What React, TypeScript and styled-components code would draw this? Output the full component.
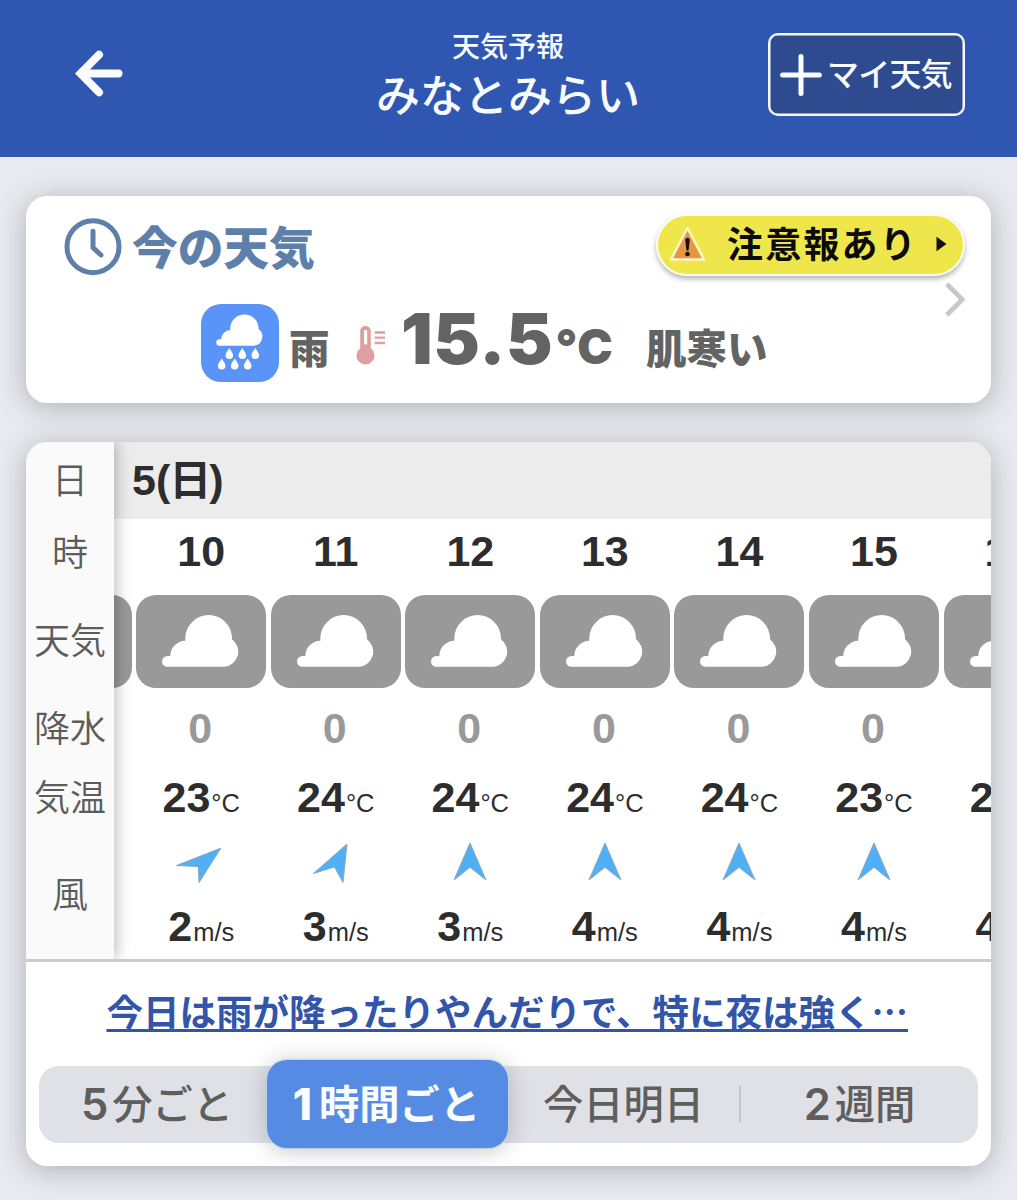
import React from "react";
import styled, { createGlobalStyle } from "styled-components";

const GlobalStyle = createGlobalStyle`
  * { box-sizing: border-box; }
  body {
    margin: 0;
    background: #e8eaef;
    font-family: "Noto Sans CJK JP", sans-serif;
  }
`;

const Screen = styled.div`
  width: 1017px;
  height: 1200px;
  overflow: hidden;
  display: flex;
  flex-direction: column;
  background: #e8eaef;
`;

const Header = styled.header`
  height: 157px;
  flex: none;
  display: grid;
  grid-template-columns: 1fr auto 1fr;
  padding: 0 52px 0 75px;
  background: #2f57b2;
  color: #f8fbff;
`;

const BackButton = styled.div`
  margin-top: 49px;
`;

const Titles = styled.div`
  display: flex;
  flex-direction: column;
  align-items: center;
  margin-right: 24px;
  padding-top: 25px;
`;

const Overline = styled.div`
  font-size: 28px;
  line-height: 40px;
  font-weight: 500;
`;

const Place = styled.h1`
  margin: 0;
  font-size: 44px;
  line-height: 56px;
  font-weight: 500;
`;

const MyWeather = styled.div`
  justify-self: end;
  margin-top: 33px;
  width: 197px;
  height: 83px;
  display: flex;
  align-items: center;
  padding-left: 10px;
  gap: 5px;
  border: 2px solid #f6faff;
  border-radius: 10px;
  background: #2f4b8f;
  box-shadow: inset 0 0 0 0.5px #f6faff;
  white-space: nowrap;
  font-size: 32px;
  line-height: 40px;
  font-weight: 500;
  letter-spacing: -0.8px;
`;

const MyWeatherText = styled.span`
  padding-bottom: 5px;
`;

const Card = styled.section`
  margin: 39px 26px 0;
  width: 965px;
  flex: none;
  border-radius: 21px;
  background: #fff;
  box-shadow: 0 4px 28px rgba(40, 42, 50, 0.3);
`;

const NowCard = styled(Card)`
  height: 207px;
  padding: 18px 24px 0 38px;
`;

const NowTop = styled.div`
  display: flex;
  justify-content: space-between;
  height: 63px;
  padding-right: 2px;
`;

const NowHeading = styled.h2`
  display: flex;
  align-items: center;
  gap: 10px;
  height: 66px;
  margin: 0;
  color: #5f7fab;
  font-size: 45.7px;
  font-weight: 900;
  line-height: 60px;
`;

const NowHeadingText = styled.span`
  padding-bottom: 5px;
`;

const Advisory = styled.div`
  display: flex;
  align-items: center;
  width: 309px;
  height: 62px;
  padding: 0 16px 2px 10px;
  border: 2px solid #fffdf0;
  border-radius: 31px;
  background: #eee64b;
  box-shadow: 0 3px 5px rgba(30, 40, 60, 0.35);
  color: #0b0b0b;
  white-space: nowrap;
`;

const AdvisoryText = styled.span`
  flex: 1;
  padding: 0 0 4px 19px;
  font-size: 36px;
  line-height: 50px;
  font-weight: 700;
  letter-spacing: 2.2px;
`;

const NowBody = styled.div`
  display: flex;
  color: #636363;
  padding-left: 137px;
`;

const WeatherTile = styled.div`
  flex: none;
  width: 78px;
  height: 78px;
  margin: 27px 10px 0 0;
`;

const Condition = styled.span<{ $w: number; $gap: number }>`
  width: ${(p) => p.$w}px;
  margin-left: ${(p) => p.$gap}px;
  margin-top: 40px;
  font-size: 40.5px;
  line-height: 60px;
  font-weight: 900;
  white-space: nowrap;
`;

const ThermoSlot = styled.div`
  width: 30px;
  margin: 48px 0 0 27px;
`;

const Temperature = styled.div`
  display: flex;
  align-items: baseline;
  width: 215px;
  margin: 27px 0 0 15px;
  font-family: Inter, sans-serif;
  font-size: 70px;
  line-height: 70px;
  font-weight: 900;
  letter-spacing: 0.7px;
  white-space: nowrap;
`;

const Degree = styled.span`
  margin-left: 2px;
  font-size: 47.5px;
  font-weight: 900;
  letter-spacing: 1px;
`;

const ChevronSlot = styled.div`
  margin: 5px 0 0 auto;
`;

const ForecastCard = styled(Card)`
  height: 724px;
  overflow: hidden;
`;

const Table = styled.div`
  display: flex;
  height: 520px;
  border-bottom: 3px solid #cbcbcc;
  overflow: hidden;
`;

const Labels = styled.div`
  position: relative;
  z-index: 1;
  flex: none;
  width: 88px;
  background: #fafafa;
  box-shadow: 2px 0 14px rgba(0, 0, 0, 0.28);
`;

const Label = styled.div<{ $h: number }>`
  height: ${(p) => p.$h}px;
  display: flex;
  align-items: center;
  justify-content: center;
  padding-bottom: 6px;
  color: #5c5c5c;
  font-size: 36px;
  line-height: 40px;
  font-weight: 350;
`;

const Timeline = styled.div`
  flex: 1;
  min-width: 0;
  overflow: hidden;
  color: #2d2d2d;
  font-family: "Liberation Sans", "Noto Sans CJK JP", sans-serif;
`;

const DateBar = styled.div`
  height: 77px;
  padding-left: 18px;
  background: #ececec;
  font-size: 43px;
  line-height: 76px;
  font-weight: 700;
`;

const DayName = styled.span`
  font-size: 42px;
  line-height: 1;
  letter-spacing: -2px;
  margin-left: -1px;
`;

const Hours = styled.div`
  display: flex;
  margin-left: -114.6px;
`;

const Hour = styled.div`
  flex: none;
  width: 134.55px;
  display: flex;
  flex-direction: column;
  align-items: center;
`;

const Cell = styled.div<{ $h: number; $muted?: boolean }>`
  height: ${(p) => p.$h}px;
  display: flex;
  align-items: baseline;
  padding-right: ${(p) => (p.$muted ? 2 : 0)}px;
  font-size: 43px;
  line-height: ${(p) => p.$h}px;
  font-weight: 700;
  color: ${(p) => (p.$muted ? "#999" : "#2d2d2d")};
`;

const Unit = styled.span`
  padding-left: 1px;
  font-size: 25.5px;
  font-weight: 400;
`;

const HourTile = styled.div`
  width: 130px;
  height: 92.5px;
  margin-top: 12px;
  padding: 20px 0 0 26px;
  border-radius: 20px;
  background: #999;
`;

const ArrowCell = styled.div`
  height: 67px;
  padding: 13px 2px 0 0;
`;

const Summary = styled.a`
  display: block;
  margin: 19px 0 0 80.5px;
  height: 60px;
  color: #3355a9;
  font-size: 36.5px;
  line-height: 60px;
  font-weight: 700;
  white-space: nowrap;
  text-decoration: underline;
  text-decoration-thickness: 2.5px;
  text-underline-offset: 3px;
  text-decoration-skip-ink: none;
`;

const Tabs = styled.div`
  display: flex;
  align-items: center;
  width: 939px;
  height: 77px;
  margin: 24.5px 13px 0;
  border-radius: 20px;
  background: #dfe1e7;
`;

const Tab = styled.div<{ $w: number; $active?: boolean; $shift?: number }>`
  flex: none;
  width: ${(p) => p.$w}px;
  height: ${(p) => (p.$active ? 88 : 77)}px;
  display: flex;
  align-items: center;
  justify-content: center;
  gap: ${(p) => (p.$active ? 7 : 4)}px;
  padding: 0 ${(p) => (p.$active ? 2 : 0)}px 0 ${(p) => p.$shift ?? 0}px;
  border-radius: 20px;
  background: ${(p) => (p.$active ? "#568be4" : "transparent")};
  box-shadow: ${(p) => (p.$active ? "0 2px 22px rgba(60,60,70,.3), 0 0 1px 1px #d9e9fd" : "none")};
  color: ${(p) => (p.$active ? "#fafdff" : "#5e5e5e")};
  font-size: 40.3px;
  line-height: 60px;
  font-weight: ${(p) => (p.$active ? 700 : 500)};
  white-space: nowrap;
`;

const TabText = styled.span`
  padding-bottom: 4px;
`;

const Digit = styled.span<{ $heavy?: boolean }>`
  font-family: Inter, sans-serif;
  font-size: 43.5px;
  font-weight: ${(p) => (p.$heavy ? 800 : 600)};
`;

const Divider = styled.div`
  width: 2px;
  height: 36px;
  background: #c3c5ca;
`;

const CLOUD =
  "M5.4 51.8A5.4 5.4 0 0 1 5.4 41H8.3A15.5 15.5 0 0 1 23.3 25.7V23.4A23.3 23.3 0 0 1 70 23.4V24.3A15.3 15.3 0 0 1 62.5 51.8Z";

const CloudIcon = () => (
  <svg width="78" height="52" viewBox="0 0 78 52" display="block">
    <path d={CLOUD} fill="#fff" />
  </svg>
);

const RAIN_DROPS = [
  [28.3, 44], [41.3, 44], [54.3, 44],
  [20.7, 54.5], [33.7, 54.5], [46.7, 54.5],
];

const RainIcon = () => (
  <svg width="78" height="78" viewBox="0 0 78 78" display="block">
    <rect width="78" height="78" rx="20" fill="#5a94f8" />
    <path d={CLOUD} fill="#fff" transform="translate(15.2 10.4) scale(.605)" />
    {RAIN_DROPS.map(([x, y]) => (
      <path
        key={`${x}-${y}`}
        transform={`translate(${x} ${y})`}
        d="M0 0C1.2 2.4 3.8 4.8 3.8 7.3A3.8 3.8 0 0 1-3.8 7.3C-3.8 4.8-1.2 2.4 0 0Z"
        fill="#fff"
      />
    ))}
  </svg>
);

const BackIcon = () => (
  <svg width="50" height="50" viewBox="0 0 50 50" fill="none" stroke="#fafdff" strokeWidth="8" strokeLinecap="round">
    <path d="M24 5.7L5.5 24.5L24 43.3M7 24.5H43.5" />
  </svg>
);

const PlusIcon = () => (
  <svg width="42" height="42" viewBox="0 0 42 42" stroke="#f8fbff" strokeWidth="5" strokeLinecap="round">
    <path d="M21 2.6V39.4M2.6 21H39.4" />
  </svg>
);

const ClockIcon = () => (
  <svg width="58" height="58" viewBox="0 0 58 58" fill="none" stroke="#5f7fab" strokeWidth="5" strokeLinecap="round" strokeLinejoin="round">
    <circle cx="29" cy="28.7" r="26" />
    <path d="M29 13.2V29.7L37 37" />
  </svg>
);

const WarningIcon = () => (
  <svg width="40" height="38" viewBox="0 0 40 38">
    <path d="M19.5 3L36 34.5H3Z" fill="#e8963f" stroke="#fdf6c8" strokeWidth="2.6" strokeLinejoin="round" />
    <path d="M17.3 15A2.2 2.2 0 0 1 21.7 15L20.7 24.6A1.2 1.2 0 0 1 18.3 24.6Z" fill="#141005" />
    <circle cx="19.5" cy="29" r="2.3" fill="#141005" />
  </svg>
);

const PlayIcon = () => (
  <svg width="11" height="16" viewBox="0 0 11 16">
    <path d="M.5.8L10.5 8L.5 15.2Z" fill="#111" />
  </svg>
);

const ThermometerIcon = () => (
  <svg width="30" height="41" viewBox="0 0 30 41" fill="#df9f9f">
    <path d="M4.2 6A5.3 5.3 0 0 1 14.8 6V23.3A9 9 0 1 1 4.2 23.3Z" />
    <rect x="8" y="5" width="3.2" height="14.5" rx="1" fill="#fff" />
    <path d="M18.7 7.5H29M18.7 12.6H29M18.7 18H29" stroke="#df9f9f" strokeWidth="2.3" />
  </svg>
);

const ChevronIcon = () => (
  <svg width="22" height="35" viewBox="0 0 22 35" fill="none" stroke="#c6c6cd" strokeWidth="4.6">
    <path d="M1.8 2L17.3 17.5L1.8 33" />
  </svg>
);

const ARROWS = {
  north: "M24 3L40 40L24 27.3L8 40Z",
  northNorthEast: "M35 4L31 42.5L22.5 27L1.5 33.4Z",
  northEast: "M44 8L22 42.5L21.3 26.6L-.5 25.5Z",
};
type Direction = keyof typeof ARROWS;

const WindArrow = ({ direction }: { direction: Direction }) => (
  <svg width="46" height="46" viewBox="0 0 46 46" overflow="visible" display="block">
    <path d={ARROWS[direction]} fill="#4fb0f8" stroke="#8fa6b8" strokeWidth="1" />
  </svg>
);

interface HourForecast {
  hour: string;
  temp: number;
  wind: number;
  direction: Direction;
}

const hours: HourForecast[] = [
  { hour: "10", temp: 23, wind: 2, direction: "northEast" },
  { hour: "11", temp: 24, wind: 3, direction: "northNorthEast" },
  { hour: "12", temp: 24, wind: 3, direction: "north" },
  { hour: "13", temp: 24, wind: 4, direction: "north" },
  { hour: "14", temp: 24, wind: 4, direction: "north" },
  { hour: "15", temp: 23, wind: 4, direction: "north" },
  { hour: "16", temp: 22, wind: 4, direction: "north" },
];

const labels: [string, number][] = [
  ["日", 78],
  ["時", 66],
  ["天気", 110],
  ["降水", 66],
  ["気温", 72],
  ["風", 122],
];

export default function App() {
  return (
    <Screen>
      <GlobalStyle />
      <Header>
        <BackButton><BackIcon /></BackButton>
        <Titles>
          <Overline>天気予報</Overline>
          <Place>みなとみらい</Place>
        </Titles>
        <MyWeather><PlusIcon /><MyWeatherText>マイ天気</MyWeatherText></MyWeather>
      </Header>

      <NowCard>
        <NowTop>
          <NowHeading><ClockIcon /><NowHeadingText>今の天気</NowHeadingText></NowHeading>
          <Advisory>
            <WarningIcon />
            <AdvisoryText>注意報あり</AdvisoryText>
            <PlayIcon />
          </Advisory>
        </NowTop>
        <NowBody>
          <WeatherTile><RainIcon /></WeatherTile>
          <Condition $w={40} $gap={0}>雨</Condition>
          <ThermoSlot><ThermometerIcon /></ThermoSlot>
          <Temperature>15.5<Degree>°C</Degree></Temperature>
          <Condition $w={123} $gap={30}>肌寒い</Condition>
          <ChevronSlot><ChevronIcon /></ChevronSlot>
        </NowBody>
      </NowCard>

      <ForecastCard>
        <Table>
          <Labels>
            {labels.map(([text, h]) => <Label key={text} $h={h}>{text}</Label>)}
          </Labels>
          <Timeline>
            <DateBar>5(<DayName>日</DayName>)</DateBar>
            <Hours>
              <Hour>
                <Cell $h={64} />
                <HourTile><CloudIcon /></HourTile>
              </Hour>
              {hours.map((h) => (
                <Hour key={h.hour}>
                  <Cell $h={64}>{h.hour}</Cell>
                  <HourTile><CloudIcon /></HourTile>
                  <Cell $h={80} $muted>0</Cell>
                  <Cell $h={59}>{h.temp}<Unit>°C</Unit></Cell>
                  <ArrowCell><WindArrow direction={h.direction} /></ArrowCell>
                  <Cell $h={65}>{h.wind}<Unit>m/s</Unit></Cell>
                </Hour>
              ))}
            </Hours>
          </Timeline>
        </Table>
        <Summary>今日は雨が降ったりやんだりで、特に夜は強く…</Summary>
        <Tabs>
          <Tab $w={228} $shift={8}><Digit>5</Digit><TabText>分ごと</TabText></Tab>
          <Tab $w={241} $active><Digit $heavy>1</Digit><TabText>時間ごと</TabText></Tab>
          <Tab $w={231}><TabText>今日明日</TabText></Tab>
          <Divider />
          <Tab $w={237}><Digit>2</Digit><TabText>週間</TabText></Tab>
        </Tabs>
      </ForecastCard>
    </Screen>
  );
}
